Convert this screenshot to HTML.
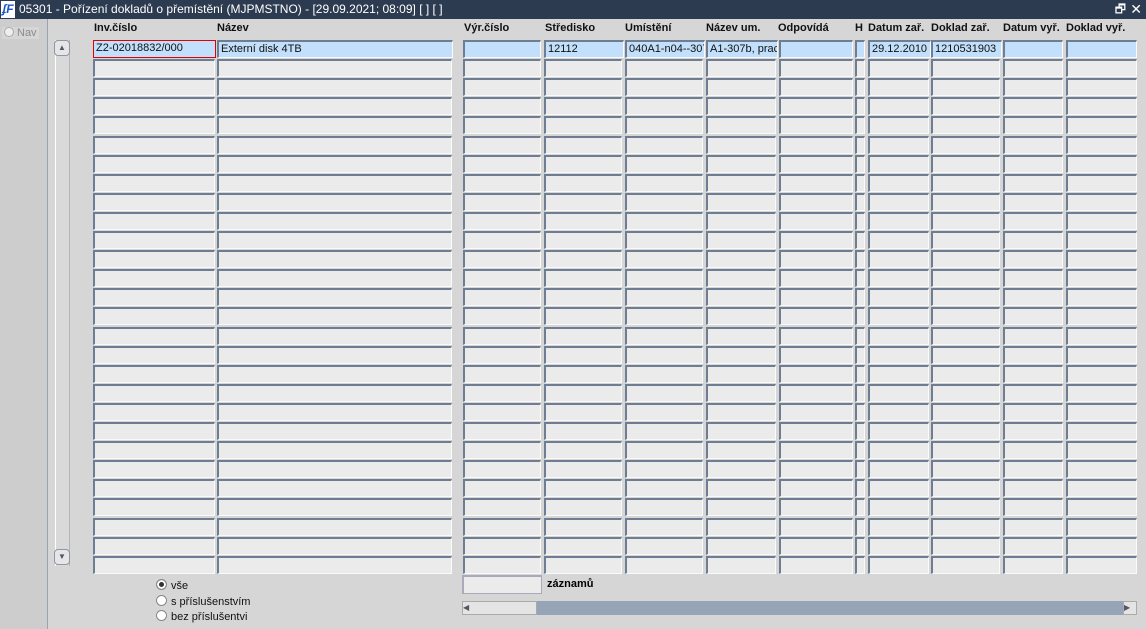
<!DOCTYPE html>
<html><head><meta charset="utf-8"><style>
body{margin:0;width:1146px;height:629px;overflow:hidden;background:#d6d6d6;font-family:"Liberation Sans",Arial,sans-serif;position:relative}
.t{position:absolute;left:0;top:0;width:1146px;height:19px;background:#2d3b50;color:#fff;font-size:12px;line-height:19px}
.t .ic{position:absolute;left:1px;top:1px;width:14px;height:17px;background:#fff;color:#1a56c8;font-weight:bold;font-style:italic;font-size:12px;line-height:17px;text-align:center}
.t .tx{position:absolute;left:19px}
.lp{position:absolute;left:0;top:19px;width:47px;height:610px;background:#cdcdcd;border-right:1px solid #9aa4b0}
.nav{position:absolute;left:2px;top:27px;font-size:11px;color:#8a8a8a;background:#d6d6d6;padding:0 2px}
.nav span{display:inline-block;width:8px;height:8px;border-radius:50%;background:#eee;border:1px solid #aaa;margin-right:3px;vertical-align:-1px}
.h{position:absolute;top:22px;font-size:11px;font-weight:bold;color:#111}
.c{position:absolute;height:15px;background:#ebebeb;border-top:2px solid #6e7d92;border-left:2px solid #6e7d92;border-right:1px solid #fafafa;border-bottom:1px solid #fafafa;box-sizing:content-box;font-size:11px;line-height:15px;padding-left:2px;overflow:hidden;white-space:nowrap;color:#111}
.c.s{background:#c2e0fb}
.sb{position:absolute;left:55px;top:40px;width:13px;height:526px;background:#d9d9d9;border-left:1px solid #fff;border-right:1px solid #b5b5b5}
.btn{position:absolute;left:54px;width:14px;height:14px;border:1px solid #8d97a5;border-radius:4px;background:#e6e6e6;font-size:8px;color:#556;text-align:center;line-height:14px}
.r{position:absolute;left:156px;font-size:11px;color:#111}
.r span{display:inline-block;width:9px;height:9px;border-radius:50%;background:#fff;border:1px solid #888;margin-right:4px;vertical-align:-1px}
.hs{position:absolute;left:462px;top:601px;width:675px;height:14px;background:#95a4b6}
</style></head><body>
<div class="t"><div class="ic">ʄF</div><div class="tx">05301 - Pořízení dokladů o přemístění (MJPMSTNO) - [29.09.2021; 08:09]  [ ]  [ ]</div>
<div style="position:absolute;right:20px;top:0;font-size:12px">🗗</div><div style="position:absolute;right:4px;top:0;font-size:14px">✕</div></div>
<div class="lp"></div>
<div class="nav"><span></span>Nav</div>
<div class="sb"></div>
<div class="btn" style="top:40px">▲</div>
<div class="btn" style="top:549px">▼</div>
<div class="h" style="left:94px">Inv.číslo</div>
<div class="h" style="left:217px">Název</div>
<div class="h" style="left:464px">Výr.číslo</div>
<div class="h" style="left:545px">Středisko</div>
<div class="h" style="left:625px">Umístění</div>
<div class="h" style="left:706px">Název um.</div>
<div class="h" style="left:778px">Odpovídá</div>
<div class="h" style="left:855px">H</div>
<div class="h" style="left:868px">Datum zař.</div>
<div class="h" style="left:931px">Doklad zař.</div>
<div class="h" style="left:1003px">Datum vyř.</div>
<div class="h" style="left:1066px">Doklad vyř.</div>
<div id="g"></div>
<div class="c s" style="left:93px;top:40px;width:119px;border:1px solid #e00000;height:16px">Z2-02018832/000</div>
<div class="c s" style="left:217px;top:40px;width:231px">Externí disk 4TB</div>
<div class="c s" style="left:544px;top:40px;width:75px">12112</div>
<div class="c s" style="left:625px;top:40px;width:75px">040A1-n04--307</div>
<div class="c s" style="left:706px;top:40px;width:67px">A1-307b, prac</div>
<div class="c s" style="left:868px;top:40px;width:58px">29.12.2010</div>
<div class="c s" style="left:931px;top:40px;width:66px">1210531903</div>
<div class="r" style="top:579px"><span style="background:#333;box-shadow:inset 0 0 0 2px #fff"></span>vše</div>
<div class="r" style="top:595px"><span></span>s příslušenstvím</div>
<div class="r" style="top:610px"><span></span>bez příslušentvi</div>
<div class="c" style="left:462px;top:575px;width:75px;height:16px;border-color:#aab;"></div>
<div style="position:absolute;left:547px;top:578px;font-size:11px;font-weight:bold">záznamů</div>
<div class="hs"><div style="position:absolute;left:0;top:0;width:75px;height:14px;background:#e4e4e4;border:1px solid #aaa;box-sizing:border-box;font-size:8px;color:#556;line-height:12px">◀</div><div style="position:absolute;right:0;top:0;width:14px;height:14px;background:#e4e4e4;border:1px solid #aaa;box-sizing:border-box;font-size:8px;color:#556;line-height:12px">▶</div></div>
<script>
var cols=[[93,122],[217,235],[463,78],[544,78],[625,78],[706,70],[779,74],[855,10],[868,61],[931,69],[1003,60],[1066,71]];
var g=document.getElementById('g'),h='';
for(var i=0;i<28;i++){var y=40+Math.round(i*19.1);for(var j=0;j<cols.length;j++){
var s=(i==0)?' s':'';h+='<div class="c'+s+'" style="left:'+cols[j][0]+'px;top:'+y+'px;width:'+(cols[j][1]-5)+'px"></div>';}}
g.innerHTML=h;
</script>
</body></html>
